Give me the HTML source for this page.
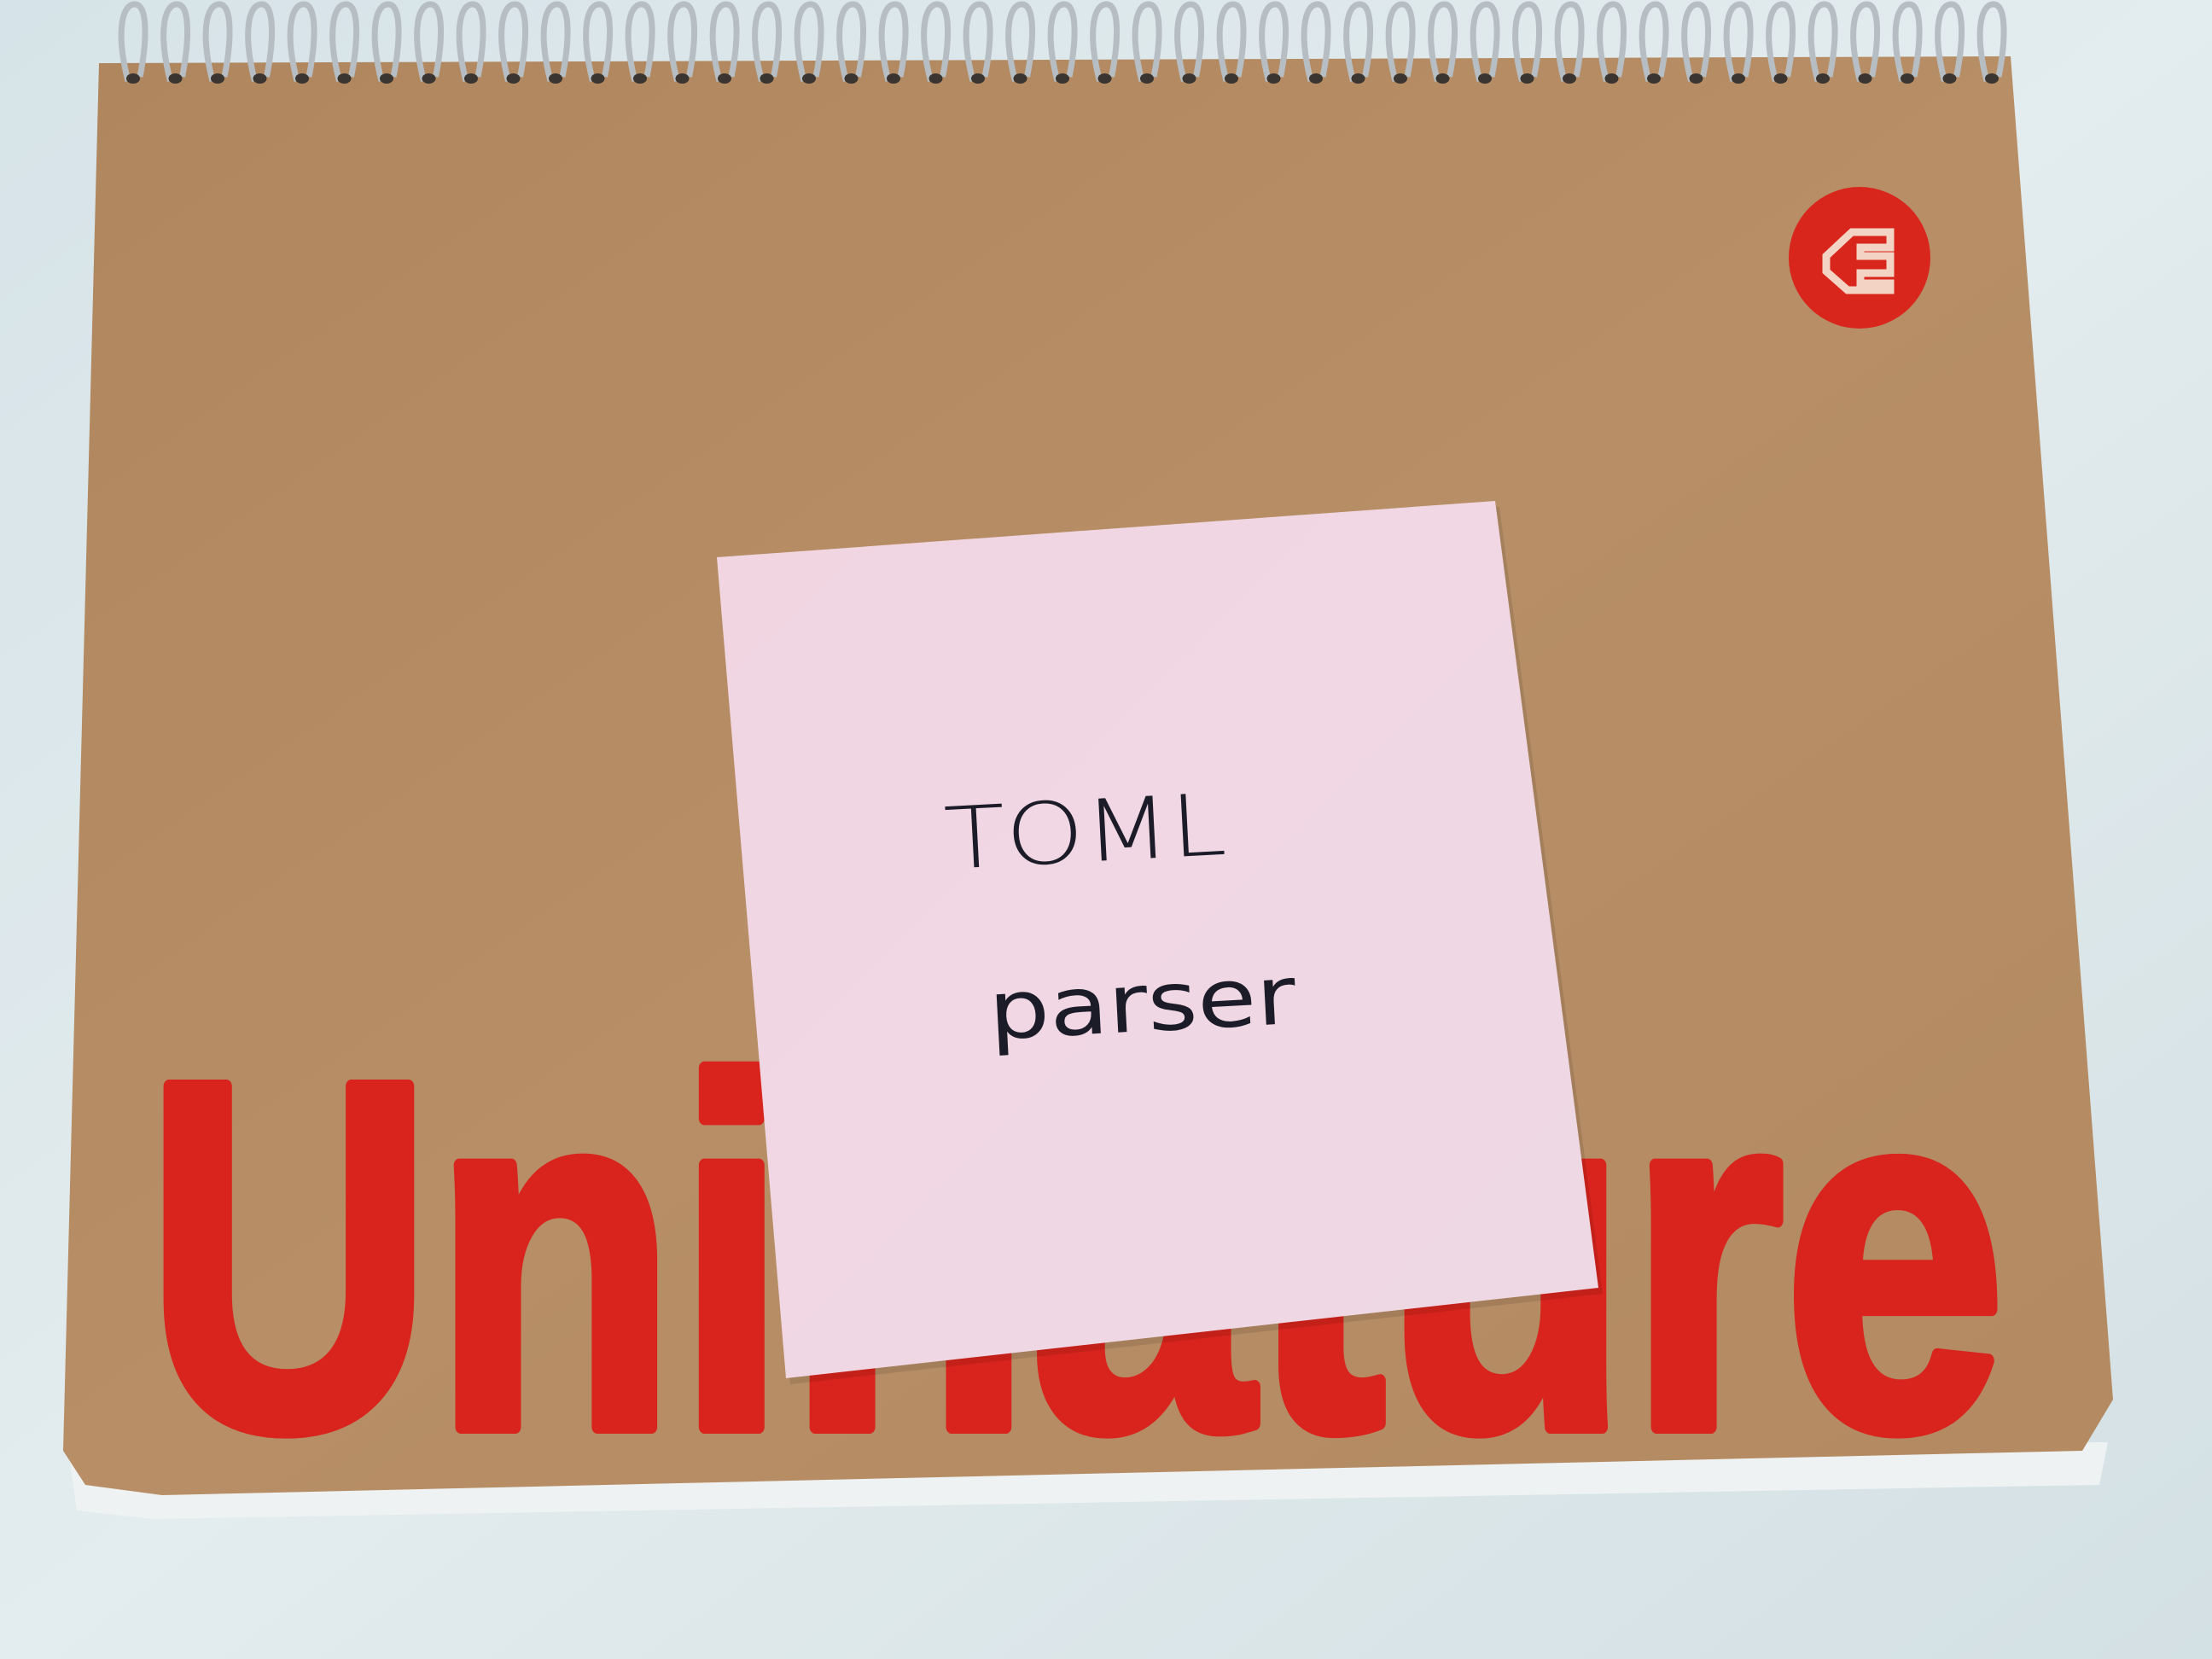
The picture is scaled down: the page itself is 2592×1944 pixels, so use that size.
<!DOCTYPE html>
<html><head><meta charset="utf-8"><style>
html,body{margin:0;padding:0;width:2592px;height:1944px;overflow:hidden;background:#dce7ea}
svg{display:block}
</style></head><body>
<svg width="2592" height="1944" viewBox="0 0 2592 1944" xmlns="http://www.w3.org/2000/svg">
<defs>
<linearGradient id="bg" x1="0" y1="0" x2="1" y2="1">
<stop offset="0" stop-color="#d6e3e8"/><stop offset="0.5" stop-color="#e3ecee"/><stop offset="1" stop-color="#d3e0e4"/>
</linearGradient>
<linearGradient id="nb" x1="0" y1="0" x2="1" y2="1">
<stop offset="0" stop-color="#b0865e"/><stop offset="0.5" stop-color="#b78e66"/><stop offset="1" stop-color="#b38a62"/>
</linearGradient>
<linearGradient id="pk" x1="0" y1="0" x2="1" y2="1">
<stop offset="0" stop-color="#f1d6e2"/><stop offset="1" stop-color="#eed8e4"/>
</linearGradient>
</defs>
<rect width="2592" height="1944" fill="url(#bg)"/>
<polygon points="80,1700 2470,1690 2460,1740 180,1780 90,1770" fill="#eef2f2"/>
<polygon points="116,74 2356,66 2476,1640 2440,1700 190,1752 100,1740 74,1700" fill="url(#nb)"/>
<circle cx="2179" cy="302" r="83" fill="#d9261c"/>
<g fill="none" stroke="#f2d3c4" stroke-width="9">
<path d="M2140,300 L2170,272 L2215,272 L2215,290 L2180,290 L2180,300 L2215,300 L2215,320 L2180,320 L2180,332 L2215,332 L2215,340 L2165,340 L2140,318 Z"/>
</g>
<text x="170" y="1672" font-family="Liberation Sans, sans-serif" font-weight="bold" font-size="580" fill="#d8241d" stroke="#d8241d" stroke-width="16" stroke-linejoin="round" textLength="2180" lengthAdjust="spacingAndGlyphs">Uninature</text>
<g id="coils"></g>
<polygon points="845,660 1757,594 1878,1516 926,1622" fill="#00000018"/>
<polygon points="840,653 1752,587 1873,1509 921,1615" fill="url(#pk)"/>
<g transform="rotate(-3 1300 1000)">
<text x="1108" y="1008" font-family="DejaVu Sans, sans-serif" font-size="100" font-weight="200" fill="#1c1c28" textLength="330" lengthAdjust="spacingAndGlyphs">TOML</text>
<text x="1149" y="1210" font-family="DejaVu Sans, sans-serif" font-size="95" fill="#1c1c28" textLength="360" lengthAdjust="spacingAndGlyphs">parser</text>
</g>
</svg>
<script>
var g=document.getElementById('coils'),s='';
for(var i=0;i<45;i++){var x=150+i*49.5;
s+='<path d="M'+(x)+',95 C'+(x-14)+',40 '+(x-8)+',5 '+(x+8)+',5 C'+(x+24)+',5 '+(x+22)+',50 '+(x+14)+',90" fill="none" stroke="#b7bec3" stroke-width="7"/>';
s+='<ellipse cx="'+(x+6)+'" cy="92" rx="8" ry="6" fill="#3a3530"/>';}
g.innerHTML=s;
</script>
</body></html>
